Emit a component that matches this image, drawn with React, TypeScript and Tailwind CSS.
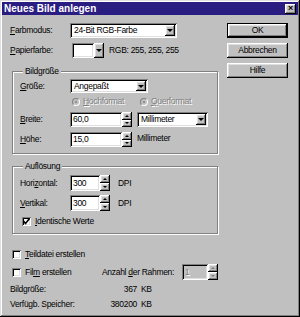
import React from 'react';

const font = "font-['Liberation_Sans',Arial,sans-serif]";
const raised = 'bg-[#c0c0c0] shadow-[inset_-1px_-1px_#000,inset_1px_1px_#fff,inset_-2px_-2px_#808080,inset_2px_2px_#dfdfdf]';
const sunken = 'bg-white shadow-[inset_1px_1px_#808080,inset_-1px_-1px_#fff,inset_2px_2px_#000,inset_-2px_-2px_#dfdfdf]';
const disabledText = 'text-[#808080] [text-shadow:1px_1px_0_#fff]';

const U: React.FC<{ children: React.ReactNode }> = ({ children }) => <span className="underline underline-offset-1">{children}</span>;

const Arrow: React.FC = () => (
  <div className={`${raised} w-[10px] h-full flex items-center justify-center shrink-0`}>
    <div className="w-0 h-0 border-l-[3px] border-r-[3px] border-t-[3px] border-l-transparent border-r-transparent border-t-black" />
  </div>
);

const Select: React.FC<{ value: string; w: string }> = ({ value, w }) => (
  <div className={`${sunken} ${w} h-full flex items-stretch p-[2px]`}>
    <span className="flex-1 pl-[2px] leading-[11px] flex items-center">{value}</span>
    <Arrow />
  </div>
);

const Spin: React.FC<{ value: string; w: string; disabled?: boolean }> = ({ value, w, disabled }) => (
  <div className="flex h-full">
    <div className={`${disabled ? 'bg-[#c0c0c0] shadow-[inset_1px_1px_#808080,inset_-1px_-1px_#fff,inset_2px_2px_#000,inset_-2px_-2px_#dfdfdf]' : sunken} ${w} h-full flex items-center pl-[3px]`}>
      <span className={disabled ? disabledText : ''}>{value}</span>
    </div>
    <div className="w-[10px] h-full flex flex-col">
      <div className={`${raised} flex-1 flex items-center justify-center`}>
        <div className={`w-0 h-0 border-l-[2px] border-r-[2px] border-b-[2px] border-l-transparent border-r-transparent ${disabled ? 'border-b-[#808080]' : 'border-b-black'}`} />
      </div>
      <div className={`${raised} flex-1 flex items-center justify-center`}>
        <div className={`w-0 h-0 border-l-[2px] border-r-[2px] border-t-[2px] border-l-transparent border-r-transparent ${disabled ? 'border-t-[#808080]' : 'border-t-black'}`} />
      </div>
    </div>
  </div>
);

const Check: React.FC<{ checked?: boolean }> = ({ checked }) => (
  <div className={`${sunken} w-[9px] h-[9px] shrink-0 flex items-center justify-center`}>
    {checked && (
      <svg width="7" height="7" viewBox="0 0 7 7">
        <path d="M0.5 3 L2.5 5.5 L6.5 0.5" fill="none" stroke="#000" strokeWidth="1.6" />
      </svg>
    )}
  </div>
);

const Radio: React.FC = () => (
  <div className="w-[8px] h-[8px] rounded-full bg-[#c0c0c0] border border-t-[#808080] border-l-[#808080] border-r-white border-b-white flex items-center justify-center shrink-0">
    <div className="w-[2px] h-[2px] rounded-full bg-[#808080]" />
  </div>
);

const Button: React.FC<{ label: string; def?: boolean; mt?: string }> = ({ label, def, mt = '' }) => (
  <div className={`${mt} w-[61px] h-[15px] ${def ? 'border border-black' : ''}`}>
    <div className={`${raised} w-full h-full flex items-center justify-center`}>{label}</div>
  </div>
);

const Group: React.FC<{ title: string; mt: string; pb: string; children: React.ReactNode }> = ({ title, mt, pb, children }) => (
  <fieldset className={`${mt} ml-[2px] w-[206px] border border-[#808080] shadow-[inset_1px_1px_#fff,1px_1px_#fff] px-[7px] ${pb} min-w-0`}>
    <legend className="ml-[3px] px-[2px] leading-[10px] bg-[#c0c0c0]">{title}</legend>
    {children}
  </fieldset>
);

export default function App() {
  return (
    <div className={`${font} w-[300px] h-[317px] bg-[#c0c0c0] p-[2px] text-[8.5px] tracking-[-0.3px] leading-[11px] whitespace-nowrap text-black flex flex-col shadow-[inset_-1px_-1px_#000,inset_1px_1px_#dfdfdf,inset_-2px_-2px_#808080,inset_2px_2px_#fff]`}>
      {/* title bar */}
      <div className="h-[13px] bg-[#2a1d82] flex items-center justify-between pl-[2px] pr-[2px]">
        <span className="text-white font-bold text-[10px] tracking-normal">Neues Bild anlegen</span>
        <div className={`${raised} w-[11px] h-[10px] flex items-center justify-center text-[9px] font-bold leading-none`}>×</div>
      </div>

      <div className="flex pt-[8px]">
        {/* left column */}
        <div className="w-[216px] pl-[8px] flex flex-col">
          <div className="h-[15px] flex items-center">
            <span className="w-[60px]"><U>F</U>arbmodus:</span>
            <Select value="24-Bit RGB-Farbe" w="w-[107px]" />
          </div>
          <div className="mt-[5px] h-[15px] flex items-center">
            <span className="w-[62px]"><U>P</U>apierfarbe:</span>
            <div className={`${sunken} w-[22px] h-full`} />
            <div className="w-[7px] h-full"><Arrow /></div>
            <span className="ml-[8px]">RGB: 255, 255, 255</span>
          </div>

          <Group title="Bildgröße" mt="mt-[8px]" pb="pb-[6px]">
            <div className="mt-[3px] h-[14px] flex items-center">
              <span className="w-[50px]"><U>G</U>röße:</span>
              <Select value="Angepaßt" w="w-[78px]" />
            </div>
            <div className="mt-[4px] h-[9px] flex items-center pl-[52px]">
              <div className="w-[68px] flex items-center gap-[3px]">
                <Radio />
                <span className={disabledText}><U>H</U>ochformat</span>
              </div>
              <div className="flex items-center gap-[3px]">
                <Radio />
                <span className={disabledText}><U>Q</U>uerformat</span>
              </div>
            </div>
            <div className="mt-[6px] h-[15px] flex items-center">
              <span className="w-[50px]"><U>B</U>reite:</span>
              <Spin value="60,0" w="w-[52px]" />
              <div className="ml-[5px] h-full"><Select value="Millimeter" w="w-[71px]" /></div>
            </div>
            <div className="mt-[5px] h-[15px] flex items-center">
              <span className="w-[50px]"><U>H</U>öhe:</span>
              <Spin value="15,0" w="w-[52px]" />
              <span className="ml-[5px] self-start pt-[1px]">Millimeter</span>
            </div>
          </Group>

          <Group title="Auflösung" mt="mt-[7px]" pb="pb-[7px]">
            <div className="mt-[4px] h-[16px] flex items-center">
              <span className="w-[50px]">Hori<U>z</U>ontal:</span>
              <Spin value="300" w="w-[30px]" />
              <span className="ml-[8px]">DPI</span>
            </div>
            <div className="mt-[4px] h-[16px] flex items-center">
              <span className="w-[50px]"><U>V</U>ertikal:</span>
              <Spin value="300" w="w-[30px]" />
              <span className="ml-[8px]">DPI</span>
            </div>
            <div className="mt-[6px] h-[9px] flex items-center pl-[2px] gap-[4px]">
              <Check checked />
              <span><U>I</U>dentische Werte</span>
            </div>
          </Group>

          <div className="mt-[15px] h-[10px] flex items-center pl-[2px] gap-[4px]">
            <Check />
            <span><U>T</U>eildatei erstellen</span>
          </div>
          <div className="mt-[5px] h-[16px] flex items-center pl-[2px]">
            <Check />
            <span className="ml-[4px] w-[77px]">Fil<U>m</U> erstellen</span>
            <span className="w-[80px]">Anzahl <U>d</U>er Rahmen:</span>
            <Spin value="1" w="w-[26px]" disabled />
          </div>
          <div className="mt-[4px] h-[11px] flex items-center">
            <div className="w-[127px] flex justify-between"><span>Bildgröße:</span><span>367</span></div>
            <span className="ml-[4px]">KB</span>
          </div>
          <div className="mt-[4px] h-[11px] flex items-center">
            <div className="w-[127px] flex justify-between"><span>Verfügb. Speicher:</span><span>380200</span></div>
            <span className="ml-[4px]">KB</span>
          </div>
        </div>

        {/* right column */}
        <div className="ml-[9px] flex flex-col">
          <Button label="OK" def />
          <Button label="Abbrechen" mt="mt-[5px]" />
          <Button label="Hilfe" mt="mt-[5px]" />
        </div>
      </div>
    </div>
  );
}
